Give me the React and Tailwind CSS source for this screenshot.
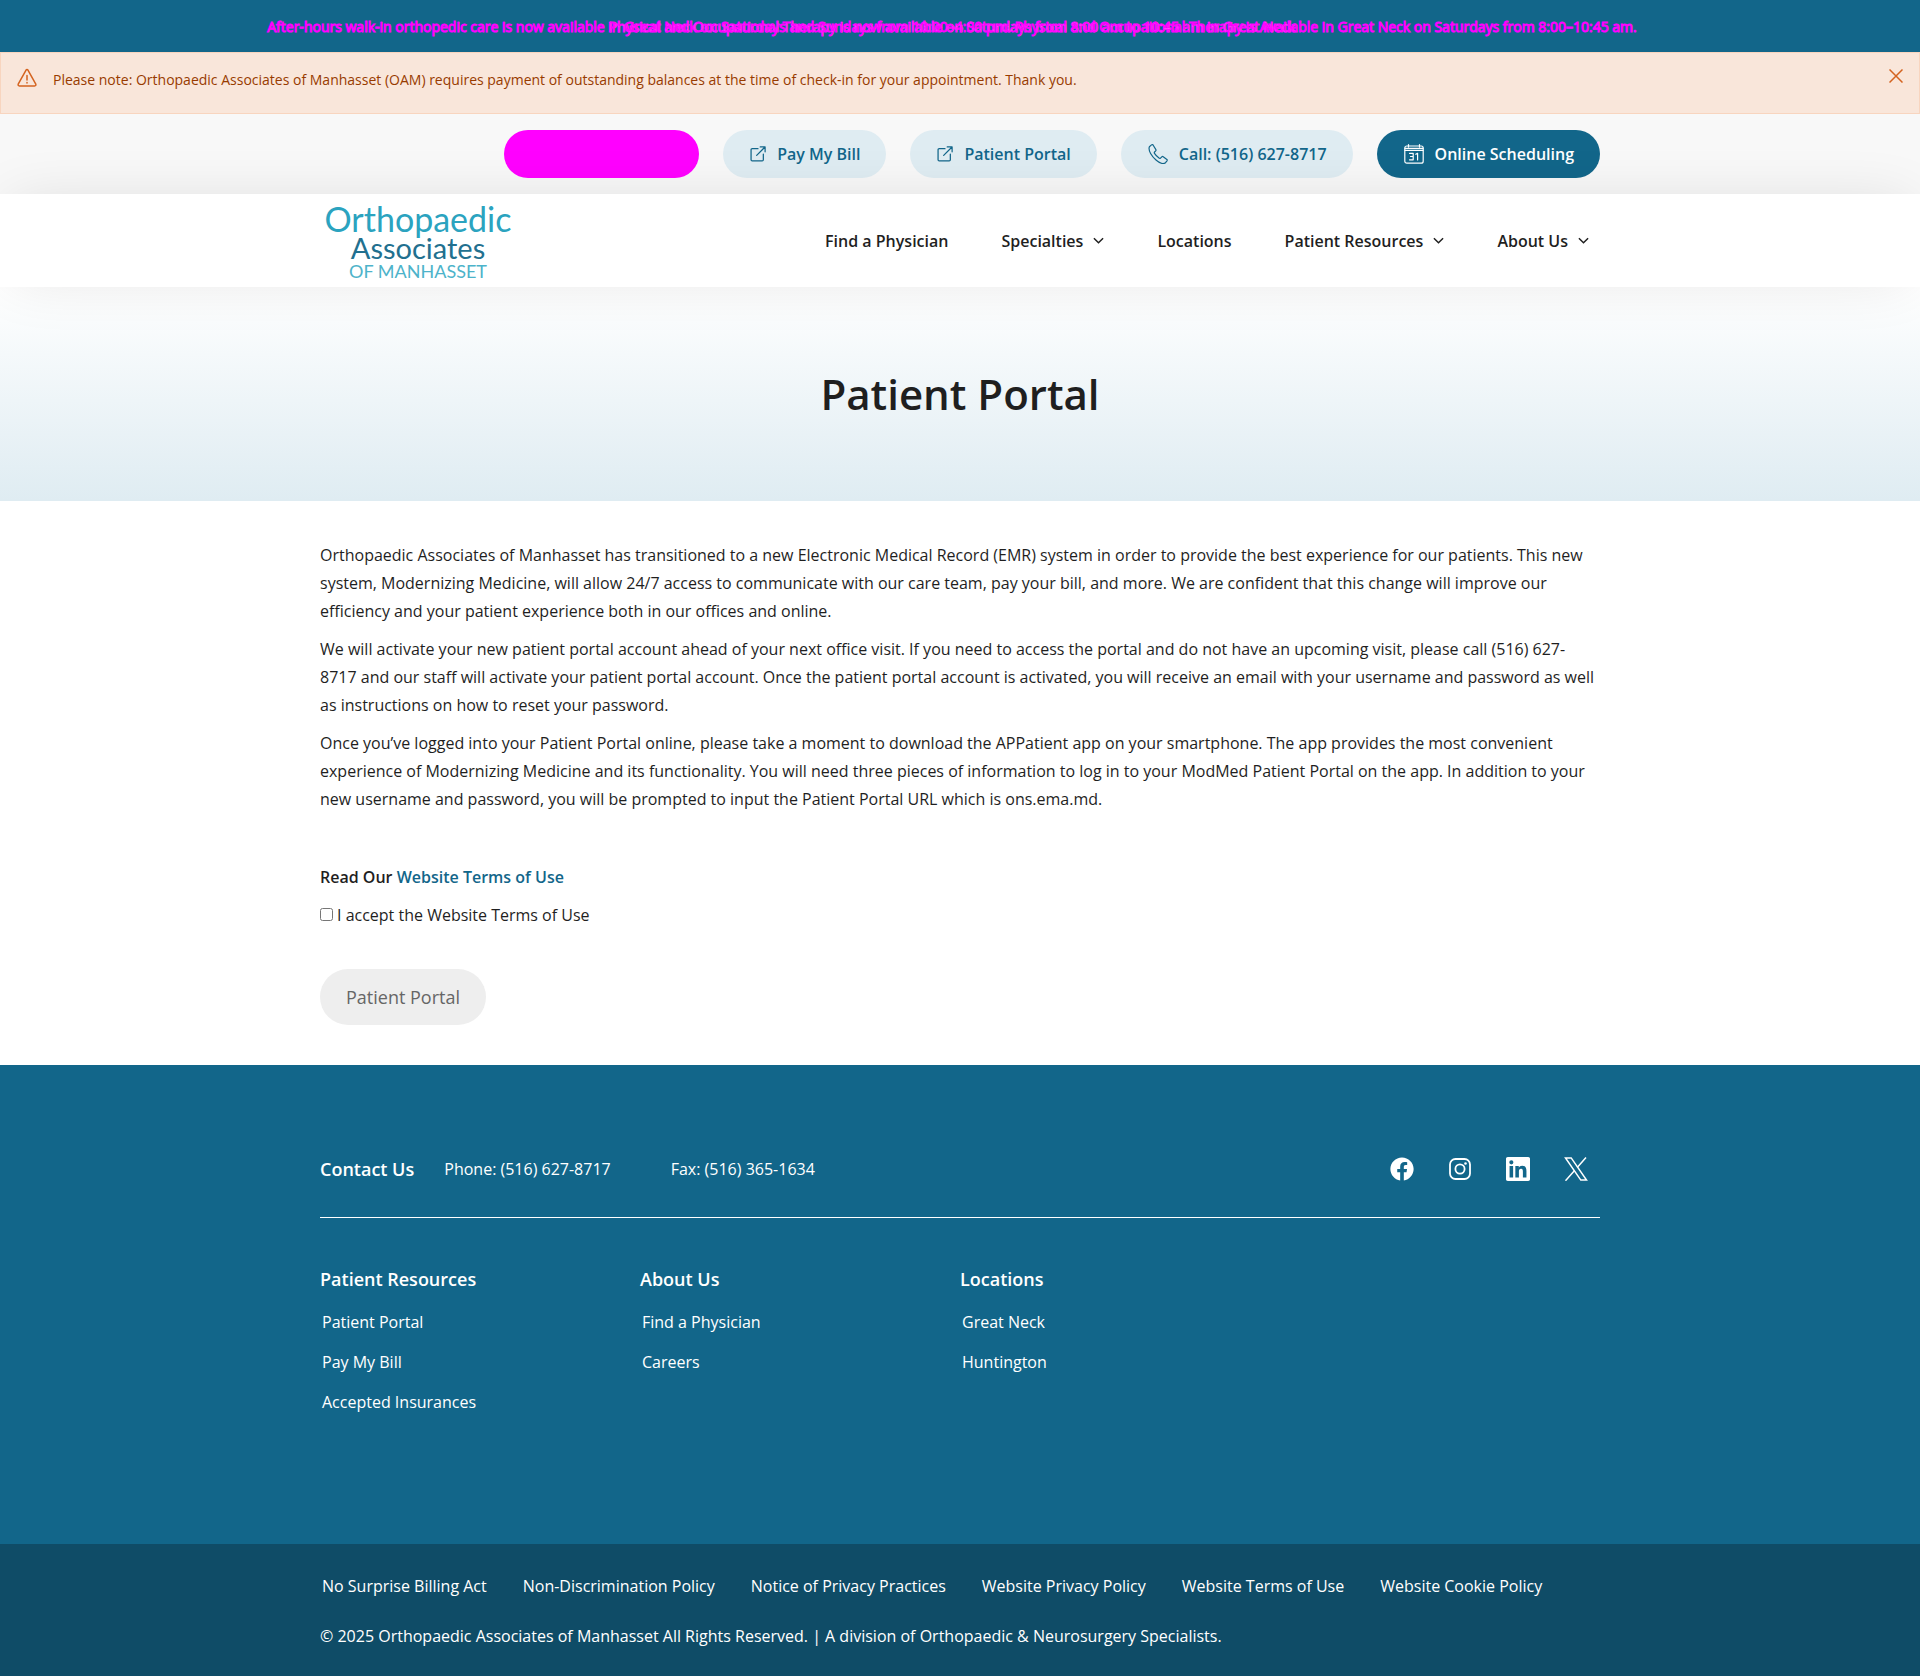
import React from "react";
import { FaFacebook } from "react-icons/fa";

const FONT = "font-['Open_Sans','Noto_Sans',sans-serif]";

function Chevron() {
  return (
    <svg viewBox="0 0 12 8" className="h-2 w-[11px]" fill="none" stroke="#1f1f1f" strokeWidth="1.6" aria-hidden="true">
      <path d="M1 1l5 5 5-5" />
    </svg>
  );
}

function ExternalIcon() {
  return (
    <svg viewBox="0 0 18 18" className="size-4" fill="none" stroke="currentColor" strokeWidth="1.4" strokeLinecap="round" strokeLinejoin="round" aria-hidden="true">
      <path d="M9 3H2.500Q1.200 3 1.200 4.300V15.500Q1.200 16.800 2.500 16.800H13.700Q15 16.800 15 15.500V9" />
      <path d="M7.500 10.500L16.600 1.400M11.500 1H17V6.500" />
    </svg>
  );
}

function PhoneIcon() {
  return (
    <svg viewBox="0 0 20 20" className="size-5" fill="none" stroke="currentColor" strokeWidth="1.2" strokeLinejoin="round" aria-hidden="true">
      <path d="M3.500 .9L1.400 2.700C-.2 6.500 4 12.500 8 16c3.500 3 7.300 4.400 9.500 2.700l1.500-1.900c.3-.5.300-1-.1-1.400l-3.700-2.700c-.5-.3-1-.3-1.400.1l-1.300 1.300c-.5.500-1 .4-1.500 0-1.800-1.300-3.300-2.900-4.500-4.700-.3-.5-.3-1 .1-1.400L7.700 6.900c.4-.4.400-.8.200-1.300L5.200 1.200C4.800.6 4.100.4 3.500.9z" />
    </svg>
  );
}

function CalendarIcon() {
  return (
    <svg viewBox="0 0 20 20" className="size-5" fill="none" stroke="currentColor" strokeWidth="1.200" strokeLinecap="round" strokeLinejoin="round" aria-hidden="true">
      <rect x=".8" y="2" width="18.400" height="17.200" rx="2" />
      <path d="M1 4.300H19M1 6.300H19M4.500 .6V3M15.500 .6V3" />
      <path d="M5.500 9.300H9.200V15.800H5.500M6.500 12.500H9.200M11.800 10.300L13.600 9.300V16" />
    </svg>
  );
}

function Instagram() {
  return (
    <svg viewBox="0 0 24 24" className="size-6" fill="none" stroke="currentColor" strokeWidth="1.8" aria-hidden="true">
      <rect x="2" y="2" width="20" height="20" rx="5.500" />
      <circle cx="12" cy="12" r="4.600" />
      <circle cx="17.500" cy="6.500" r="1.300" fill="currentColor" stroke="none" />
    </svg>
  );
}

function LinkedIn() {
  return (
    <svg viewBox="0 0 24 24" className="size-6" fill="currentColor" aria-hidden="true">
      <path d="M22.23 0H1.770C.79 0 0 .77 0 1.730V22.270C0 23.230.79 24 1.770 24H22.230C23.200 24 24 23.230 24 22.270V1.730C24 .77 23.200 0 22.230 0zM7.120 20.450H3.560V9H7.120zM5.340 7.430a2.060 2.060 0 1 1 0-4.130 2.060 2.060 0 0 1 0 4.130zM20.450 20.450H16.890V14.880C16.890 13.550 16.870 11.850 15.040 11.850 13.190 11.850 12.910 13.290 12.910 14.780V20.450H9.350V9H12.770V10.560H12.810C13.290 9.660 14.450 8.720 16.190 8.720 19.790 8.720 20.450 11.080 20.450 14.160z" />
    </svg>
  );
}

function XLogo() {
  return (
    <svg viewBox="0 0 24 24" className="size-6" fill="none" stroke="currentColor" strokeWidth="1.5" aria-hidden="true">
      <path d="M1.500 .9H7.200L22.500 23.100H16.800z" />
      <path d="M22 .5L13.200 10.600M10.600 13.600L1.500 23.700" />
    </svg>
  );
}

function Logo() {
  return (
    <svg viewBox="0 0 196 80" className="h-20 w-[196px] overflow-visible" role="img" aria-label="Orthopaedic Associates of Manhasset">
      <g fontFamily="Lato, sans-serif" textAnchor="middle">
        <text x="98" y="31" fontSize="34" fill="#2ba3bf">Orthopaedic</text>
        <text x="98" y="58" fontSize="29" fill="#22708f">Associates</text>
        <text x="98" y="77" fontSize="18" fill="#4db3ca">OF MANHASSET</text>
      </g>
    </svg>
  );
}

const pill = "flex h-12 items-center gap-[11px] rounded-full pr-[26px] pl-[27px] text-base font-semibold";
const lightPill = pill + " bg-[#dfecf2] text-[#12668a]";

const navItems = [
  ["Find a Physician", false],
  ["Specialties", true],
  ["Locations", false],
  ["Patient Resources", true],
  ["About Us", true],
];

const footerCols = [
  ["Patient Resources", ["Patient Portal", "Pay My Bill", "Accepted Insurances"]],
  ["About Us", ["Find a Physician", "Careers"]],
  ["Locations", ["Great Neck", "Huntington"]],
];

const legal = [
  "No Surprise Billing Act",
  "Non-Discrimination Policy",
  "Notice of Privacy Practices",
  "Website Privacy Policy",
  "Website Terms of Use",
  "Website Cookie Policy",
];

const socials = [
  ["Facebook", <FaFacebook className="size-6" />],
  ["Instagram", <Instagram />],
  ["LinkedIn", <LinkedIn />],
  ["X", <XLogo />],
];

export default function App() {
  return (
    <div className={FONT + " bg-white text-base text-[#1f1f1f]"}>
      <div className="grid h-[52px] items-center justify-items-center overflow-hidden bg-[#12668a] pt-0.5 pr-4 text-sm whitespace-nowrap">
        <p className="col-start-1 row-start-1 text-[#ff00ff] [-webkit-text-stroke:1px_#ff00ff]">
          After-hours walk-in orthopedic care is now available in Great Neck on Saturdays and Sundays from 10:00–4:00 pm. Physical and Occupational Therapy is Available in Great Neck on Saturdays from 8:00–10:45 am.
        </p>
        <p className="col-start-1 row-start-1 text-white [-webkit-text-stroke:1px_#ff00ff]">
          Physical and Occupational Therapy is now available on Saturdays from 8:00 am to 10:45 am in Great Neck
        </p>
      </div>

      <div role="alert" className="flex h-[62px] items-start border border-[#f8d5bf] bg-[#f9e6da] px-4 pt-[15px] text-sm leading-6 text-[#983b00]">
        <svg viewBox="0 0 20 20" className="mr-4 size-5 shrink-0" fill="none" stroke="#d4631f" strokeWidth="1.500" strokeLinejoin="round" strokeLinecap="round" aria-hidden="true">
          <path d="M8.900 2.300Q10 .8 11.100 2.300L18.800 16.200Q19.300 17.800 17.600 17.900H2.400Q.7 17.800 1.200 16.200z" />
          <path d="M10 7.500V12M10 14.500V15" />
        </svg>
        <p className="flex-1">
          Please note: Orthopaedic Associates of Manhasset (OAM) requires payment of outstanding balances at the time of check-in for your appointment. Thank you.
        </p>
        <button type="button" aria-label="Dismiss" className="pt-px text-[#d4631f]">
          <svg viewBox="0 0 14 14" className="size-[14px]" fill="none" stroke="currentColor" strokeWidth="1.500" aria-hidden="true">
            <path d="M.5 .5l13 13M13.500 .5l-13 13" />
          </svg>
        </button>
      </div>

      <div className="bg-[#f8f8f8]">
        <div className="mx-auto flex h-20 max-w-[1280px] items-center justify-end gap-6">
          <div className="h-12 w-[195px] rounded-full bg-[#ff00ff]" />
          <a href="#bill" className={lightPill}><ExternalIcon />Pay My Bill</a>
          <a href="#portal" className={lightPill}><ExternalIcon />Patient Portal</a>
          <a href="#call" className={lightPill}><PhoneIcon />Call: (516) 627-8717</a>
          <a href="#schedule" className={pill + " bg-[#12668a] text-white"}><CalendarIcon />Online Scheduling</a>
        </div>
      </div>

      <header className="relative z-10 bg-white shadow-[0_0_60px_-10px_rgba(0,0,0,0.12)]">
        <div className="mx-auto flex h-[93px] max-w-[1280px] items-center justify-between pr-[11px]">
          <a href="#home"><Logo /></a>
          <nav className="flex items-center gap-[53px] font-semibold">
            {navItems.map(([label, menu]) =>
              menu ? (
                <button type="button" key={label} className="flex items-center gap-[10px]">{label}<Chevron /></button>
              ) : (
                <a href="#nav" key={label}>{label}</a>
              )
            )}
          </nav>
        </div>
      </header>

      <section className="flex h-[214px] items-center justify-center bg-linear-to-b from-white to-[#dfecf2] pb-0.5">
        <h1 className="text-[42px] font-semibold">Patient Portal</h1>
      </section>

      <main className="mx-auto max-w-[1280px] pt-10 pb-10 leading-7">
        <div className="flex flex-col gap-[10px]">
          <p>Orthopaedic Associates of Manhasset has transitioned to a new Electronic Medical Record (EMR) system in order to provide the best experience for our patients. This new system, Modernizing Medicine, will allow 24/7 access to communicate with our care team, pay your bill, and more. We are confident that this change will improve our efficiency and your patient experience both in our offices and online.</p>
          <p>We will activate your new patient portal account ahead of your next office visit. If you need to access the portal and do not have an upcoming visit, please call (516) 627-8717 and our staff will activate your patient portal account. Once the patient portal account is activated, you will receive an email with your username and password as well as instructions on how to reset your password.</p>
          <p>Once you’ve logged into your Patient Portal online, please take a moment to download the APPatient app on your smartphone. The app provides the most convenient experience of Modernizing Medicine and its functionality. You will need three pieces of information to log in to your ModMed Patient Portal on the app. In addition to your new username and password, you will be prompted to input the Patient Portal URL which is ons.ema.md.</p>
        </div>
        <p className="mt-[50px] font-semibold">Read Our <a href="#terms" className="text-[#12668a]">Website Terms of Use</a></p>
        <label className="mt-[10px] block">
          <input type="checkbox" className="mr-1 size-[13px]" />
          I accept the Website Terms of Use
        </label>
        <button type="button" disabled className="mt-10 h-14 rounded-full bg-[#eeeeee] px-[26px] text-lg text-[#666666]">Patient Portal</button>
      </main>

      <footer className="bg-[#12668a] text-white">
        <div className="mx-auto h-[479px] max-w-[1280px] pt-20">
          <div className="flex h-[73px] items-start border-b border-white">
            <h2 className="mr-[30px] text-lg leading-12 font-semibold">Contact Us</h2>
            <a href="#phone" className="mr-[60px] leading-12">Phone: (516) 627-8717</a>
            <span className="leading-12">Fax: (516) 365-1634</span>
            <div className="ml-auto flex h-12 items-center gap-[34px] pr-3">
              {socials.map(([name, icon]) => (
                <a href="#social" key={name} aria-label={name}>{icon}</a>
              ))}
            </div>
          </div>
          <div className="grid grid-cols-4 pt-[47px]">
            {footerCols.map(([title, links]) => (
              <div key={title}>
                <h3 className="text-lg leading-7 font-semibold">{title}</h3>
                <ul className="pt-[9px] pl-0.5">
                  {links.map((l) => (
                    <li key={l} className="leading-10"><a href="#link">{l}</a></li>
                  ))}
                </ul>
              </div>
            ))}
          </div>
        </div>
        <div className="bg-[#0f4c67]">
          <div className="mx-auto h-[132px] max-w-[1280px] pt-7">
            <ul className="flex gap-9 pl-0.5 leading-7">
              {legal.map((l) => (
                <li key={l}><a href="#legal">{l}</a></li>
              ))}
            </ul>
            <p className="mt-[22px] leading-7">© 2025 Orthopaedic Associates of Manhasset All Rights Reserved. | A division of Orthopaedic &amp; Neurosurgery Specialists.</p>
          </div>
        </div>
      </footer>
    </div>
  );
}
